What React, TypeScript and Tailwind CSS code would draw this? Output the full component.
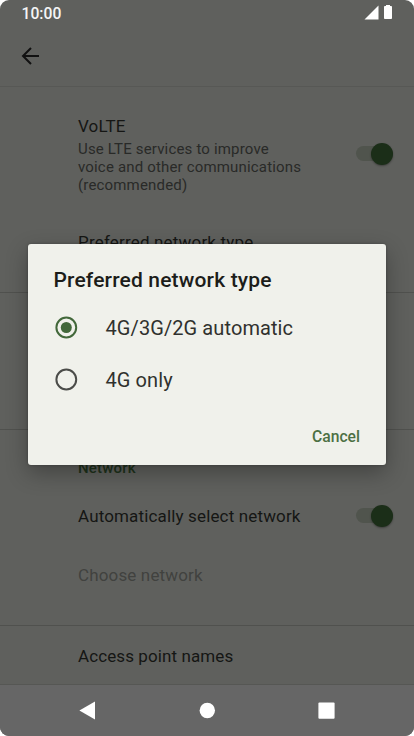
import { useState } from 'react';

const networkTypes = [
  { id: 'auto', label: '4G/3G/2G automatic' },
  { id: '4g', label: '4G only' },
];

function StatusBar() {
  return (
    <div className="flex h-7 items-start justify-between pl-[21.5px] pr-[21px]">
      <span className="mt-[4px] text-[15.7px] leading-[19px] font-medium text-[#f5f5f5]">10:00</span>
      <svg className="mt-[4px]" width="30" height="16" viewBox="0 0 30 16" fill="#fff">
        <path d="M1.5 15.5 15.5 1.5V15.5Z" />
        <path d="M23 1h4v1h1.200q.8 0 .8 1v11q0 1-.8 1h-6.400q-.8 0-.8-1V3q0-1 .8-1h1.200Z" />
      </svg>
    </div>
  );
}

function Toggle() {
  return (
    <div className="relative h-[15px] w-[37px] rounded-full bg-[#50544d]">
      <div className="absolute -top-[3.5px] right-0 h-[22px] w-[22px] rounded-full bg-[#1b2e18] shadow-[0_1px_2px_rgba(0,0,0,0.35)]" />
    </div>
  );
}

function Radio({ checked }: { checked: boolean }) {
  return (
    <svg width="24" height="24" viewBox="0 0 24 24" fill="none">
      <circle cx="12.3" cy="11.5" r="9.9" stroke={checked ? '#42683a' : '#4b4c49'} strokeWidth="2" />
      {checked && <circle cx="12.3" cy="11.5" r="5.5" fill="#42683a" />}
    </svg>
  );
}

function NetworkDialog() {
  const [selected, setSelected] = useState('auto');

  return (
    <div className="absolute top-[244px] left-[28px] flex h-[221px] w-[358px] flex-col rounded-[3px] bg-[#f0f1eb] shadow-[0_8px_22px_rgba(0,0,0,0.3),0_0_3px_rgba(0,0,0,0.25)]">
      <h2 className="mt-[23px] ml-[25.5px] text-[21px] leading-[26px] font-medium tracking-[0.16px] text-[#1c1d1a]">
        Preferred network type
      </h2>
      <div className="mt-[9px] flex flex-col">
        {networkTypes.map((type) => (
          <button
            key={type.id}
            onClick={() => setSelected(type.id)}
            className="flex h-[52px] items-center gap-[27.5px] pl-[26px] text-left"
          >
            <Radio checked={selected === type.id} />
            <span className="text-[20px] leading-[24px] tracking-[0.09px] text-[#30312e]">{type.label}</span>
          </button>
        ))}
      </div>
      <button className="mt-[21px] mr-[26px] self-end text-[15.7px] leading-[20px] font-medium text-[#4c7043]">
        Cancel
      </button>
    </div>
  );
}

export default function App() {
  return (
    <div className="h-[736px] w-[414px] bg-white font-['Roboto',sans-serif]">
      <div className="relative flex h-full flex-col overflow-hidden rounded-[9px] bg-[#5f605d] text-[17px] leading-[20px] text-[#151614]">
        <StatusBar />
        <header className="flex h-[59px] items-center border-b border-[#575855] pb-[2px] pl-[18px]">
          <svg width="24" height="24" viewBox="0 0 24 24" fill="none" stroke="#111" strokeWidth="2">
            <path d="M21 12H5M13 4 5 12l8 8" />
          </svg>
        </header>

        <section className="flex h-[206px] flex-col border-b border-[#50514e] pl-[78px]">
          <div className="mt-[29px] flex justify-between pr-[21px]">
            <div>
              <p className="tracking-[0.15px]">VoLTE</p>
              <p className="mt-[4px] w-[235px] text-[15px] leading-[18px] tracking-[0.17px] text-[#292a28]">
                Use LTE services to improve
                <br />
                voice and other communications
                <br />
                (recommended)
              </p>
            </div>
            <div className="mt-[30px]">
              <Toggle />
            </div>
          </div>
          <p className="mt-[38px] tracking-[0.18px]">Preferred network type</p>
        </section>

        <section className="h-[137px] border-b border-[#50514e]" />

        <section className="flex h-[196px] flex-col border-b border-[#50514e] pl-[78px]">
          <p className="mt-[28px] text-[15px] font-medium tracking-[0.2px] text-[#1e321b]">Network</p>
          <div className="mt-[28px] flex items-center justify-between pr-[21px]">
            <p className="tracking-[0.15px]">Automatically select network</p>
            <div className="pb-[1px]">
              <Toggle />
            </div>
          </div>
          <p className="mt-[39px] tracking-[0.15px] text-[#41423f]">Choose network</p>
        </section>

        <section className="h-[59px] border-b border-[#565754] pt-[20px] pl-[78px]">
          <p className="tracking-[0.1px]">Access point names</p>
        </section>

        <nav className="flex flex-1 items-center justify-center bg-[#666]">
          <svg width="256" height="20" viewBox="0 0 256 20" fill="#fff">
            <path d="M0.4 9.5 16 0.6V18.4Z" />
            <circle cx="128.3" cy="9.5" r="7.7" />
            <rect x="239.4" y="1.5" width="16.200" height="16.200" rx="1" />
          </svg>
        </nav>

        <NetworkDialog />
      </div>
    </div>
  );
}
